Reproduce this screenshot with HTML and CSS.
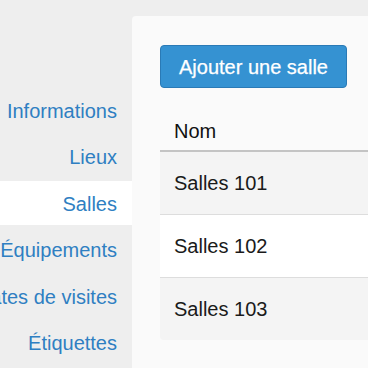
FILE: index.html
```html
<!DOCTYPE html>
<html lang="fr">
<head>
<meta charset="utf-8">
<title>Salles</title>
<link rel="stylesheet" href="styles.css">
</head>
<body>
<div class="layout">
  <nav class="sidebar">
    <a class="nav-item" href="#"><span>Informations</span></a>
    <a class="nav-item" href="#"><span>Lieux</span></a>
    <a class="nav-item active" href="#"><span>Salles</span></a>
    <a class="nav-item" href="#"><span>Équipements</span></a>
    <a class="nav-item" href="#"><span>Dates de visites</span></a>
    <a class="nav-item" href="#"><span>Étiquettes</span></a>
  </nav>
  <main class="panel">
    <button class="btn" type="button">Ajouter une salle</button>
    <table class="table">
      <thead>
        <tr><th>Nom</th></tr>
      </thead>
      <tbody>
        <tr class="odd"><td>Salles 101</td></tr>
        <tr><td>Salles 102</td></tr>
        <tr class="odd"><td>Salles 103</td></tr>
      </tbody>
    </table>
  </main>
</div>
</body>
</html>
```
FILE: styles.css
```css
html, body {
  margin: 0;
  padding: 0;
}
body {
  background: #eeeeee;
  font-family: "Liberation Sans", Arial, Helvetica, sans-serif;
  font-size: 20px;
  color: #1a1a1a;
  overflow: hidden;
  width: 368px;
  height: 368px;
}
.layout {
  display: flex;
  width: 640px;
  padding-top: 16px;
}
.sidebar {
  flex: none;
  width: 132px;
  padding-top: 72px;
  display: flex;
  flex-direction: column;
  gap: 2.4px;
}
.nav-item {
  display: flex;
  justify-content: flex-end;
  padding: 11px 15px 9px 0;
  line-height: 24px;
  color: #2f7fc2;
  text-decoration: none;
  white-space: nowrap;
}
.nav-item.active {
  background: #ffffff;
}
.panel {
  flex: 1;
  background: #fafafa;
  border-radius: 4px 0 0 0;
  padding: 29px 28px;
  min-height: 420px;
}
.btn {
  display: inline-block;
  font-family: inherit;
  font-size: 20px;
  line-height: 24px;
  color: #ffffff;
  background: #3592d2;
  border: 1px solid #2a7ab6;
  border-radius: 4px;
  padding: 9px 18px 8px;
  margin: 0;
  cursor: pointer;
  -webkit-text-stroke: 0.25px #ffffff;
}
.table {
  margin-top: 18px;
  width: 100%;
  border-collapse: separate;
  border-spacing: 0;
}
.table th {
  text-align: left;
  font-weight: normal;
  padding: 13px 14px 7px;
  line-height: 24px;
  color: #111111;
  border-bottom: 2px solid #c4c4c4;
}
.table td {
  padding: 19px 14px;
  line-height: 24px;
  color: #1a1a1a;
}
.table tbody tr + tr td {
  border-top: 1px solid #dddddd;
}
.table tbody tr {
  background: #ffffff;
}
.table tbody tr.odd {
  background: #f4f4f4;
}
.table tbody tr:last-child td {
  border-bottom-left-radius: 4px;
}
```
